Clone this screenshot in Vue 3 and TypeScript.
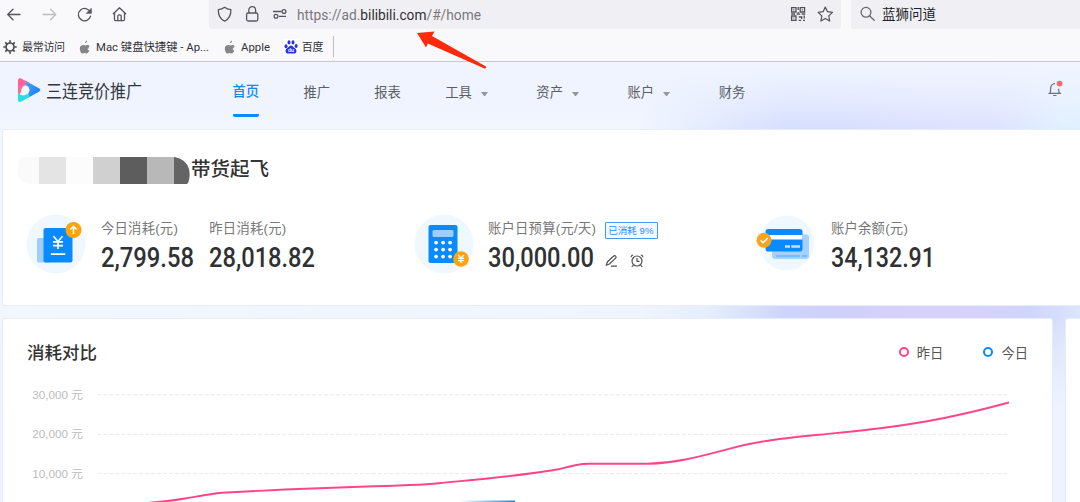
<script setup lang="ts">
interface NavItem { label: string; menu?: boolean; active?: boolean }

const nav: NavItem[] = [
  { label: '首页', active: true },
  { label: '推广' },
  { label: '报表' },
  { label: '工具', menu: true },
  { label: '资产', menu: true },
  { label: '账户', menu: true },
  { label: '财务' },
]

const ticks: string[] = ['30,000 元', '20,000 元', '10,000 元']
const keypad: { x: number; y: number }[] = [0, 1, 2].flatMap((r) =>
  [0, 1, 2].map((c) => ({ x: 20.9 + c * 7, y: 27.8 + r * 7 })),
)
const mosaic: string[] = ['#fafafa', '#e4e4e4', '#fcfcfc', '#d0d0d0', '#5d5d5d', '#b8b8b8', '#646464']
const apple =
  'M8.1 3.1C8.1 1.7 9 .7 10 .4c.1 1.300-.7 2.500-1.900 2.700ZM11.500 8.500c0-1.500 1.100-2.200 1.200-2.300-.7-1-1.800-1.200-2.200-1.200-1-.1-1.700.5-2.200.5-.5 0-1.200-.5-2-.5C4.300 5 2.800 6.300 2.800 8.700c0 2.300 1.500 4.900 2.800 4.900.7 0 1.100-.5 2-.5s1.200.5 2 .5c1.400 0 2.500-2.500 2.700-3-.1-.1-1.800-.6-1.800-2.100Z'
</script>

<template>
  <div class="page">
    <div class="toolbar">
      <svg class="controls" width="208.700" height="29" viewBox="0 0 208.700 29">
        <g fill="none" stroke="#55555d" stroke-width="1.3" stroke-linecap="round" stroke-linejoin="round">
          <path d="M20 14.500H8M13 9.300 7.700 14.500 13 19.700" />
          <path stroke="#bcbcc1" d="M43 14.500H55M50.500 9.300l5.200 5.200-5.200 5.200" />
          <path d="M90.300 12.200a6.200 6.200 0 1 0 .3 4" />
          <path fill="#55555d" stroke-width=".8" d="M91.300 8.700v4.600h-4.600Z" />
          <path d="M113.300 13.800 119.500 7.800 125.700 13.800M114.500 13v6.600q0 1 1 1h8q1 0 1-1V13M117.800 20.300v-4.300q0-1.200 1.700-1.200t1.700 1.200v4.300" />
        </g>
      </svg>
      <div class="address">
        <svg width="88" height="29" viewBox="0 0 88 29">
          <g fill="none" stroke="#55555d" stroke-width="1.3" stroke-linejoin="round">
            <path d="M15.600 7.300c2 1.700 4.100 2.200 6.300 2.300.1 4.700-.7 9.200-6.300 11.600-5.600-2.400-6.400-6.900-6.300-11.600 2.200-.1 4.300-.6 6.300-2.300Z" />
            <rect x="37.600" y="13" width="11.200" height="8" rx="1.500" />
            <path d="M39.800 13v-3a3.400 3.400 0 0 1 6.800 0v3" />
            <path d="M64 11.500h8.600M70 16.300h7" />
            <circle cx="75" cy="11.500" r="1.900" /><circle cx="67" cy="16.300" r="1.900" />
          </g>
        </svg>
        <svg class="url" width="190" height="29"><text x="0" y="20" textLength="184" lengthAdjust="spacingAndGlyphs">https://ad.<tspan class="domain">bilibili.com</tspan>/#/home</text></svg>
        <svg class="tail" width="55" height="29" viewBox="0 0 55 29">
          <g fill="none" stroke="#505057" stroke-width="1.300">
            <path d="M5.600 7.600h4.400v4.400H5.600ZM14.200 7.600h4.400v4.400h-4.400ZM5.600 16h4.400v4.400H5.600Z" />
            <path d="M12.200 7v3M12.200 12v2.500M5.200 14h4M10.700 14.200h3.500M15.700 14h3.500M12.700 17h3v2M18.200 15.500v3M12.700 20.300h2.500M17 20.300h2" />
            <path d="M7.300 9.800h1M15.900 9.800h1M7.300 18.200h1" />
          </g>
          <path d="m39.300 7 2.200 4.700 5 .7-3.700 3.500.9 5.100-4.400-2.500-4.400 2.500.9-5.100-3.700-3.500 5-.7Z" fill="none" stroke="#505057" stroke-width="1.200" stroke-linejoin="round" />
        </svg>
      </div>
      <div class="search">
        <svg width="31" height="29" viewBox="0 0 31 29"><g fill="none" stroke="#68686f" stroke-width="1.300" stroke-linecap="round"><circle cx="15" cy="12.300" r="4.900" /><path d="m18.700 16 4.500 4.300" /></g></svg>
        <span>蓝狮问道</span>
      </div>
    </div>

    <div class="bookmarks">
      <svg class="gear" width="14" height="14" viewBox="0 0 14 14"><g fill="none" stroke="#4a4a50"><circle cx="7" cy="7" r="4" stroke-width="1.700" /><path stroke-width="1.700" d="M7 .3v2.200M7 11.500v2.200M.3 7h2.200M11.500 7h2.200M2.300 2.300l1.500 1.500M10.200 10.200l1.500 1.500M11.700 2.300l-1.500 1.500M3.800 10.200l-1.500 1.500" /></g></svg>
      <span class="bm first">最常访问</span>
      <svg class="apple" width="15" height="14" viewBox="0 0 15 14"><path fill="#858585" :d="apple" /></svg>
      <svg class="bm-svg" width="113" height="20"><text x="0" y="14" textLength="113" lengthAdjust="spacingAndGlyphs">Mac 键盘快捷键 - Ap...</text></svg>
      <svg class="apple second" width="15" height="14" viewBox="0 0 15 14"><path fill="#858585" :d="apple" /></svg>
      <svg class="bm-svg" width="30" height="20"><text x="0" y="14" textLength="29" lengthAdjust="spacingAndGlyphs">Apple</text></svg>
      <svg class="baidu" width="16" height="16" viewBox="0 0 16 16">
        <rect width="16" height="16" rx="1" fill="#fff" />
        <g fill="#2932e1"><ellipse cx="3" cy="7.200" rx="1.500" ry="2" /><ellipse cx="6" cy="3.400" rx="1.500" ry="2.100" /><ellipse cx="10" cy="3.400" rx="1.500" ry="2.100" /><ellipse cx="13.100" cy="7" rx="1.500" ry="2" /><path d="M8 6.500c1.700 0 2.200 1.500 3.600 2.600 1.500 1.200 2.200 2.200 1.700 3.800-.5 1.800-2.300 1.700-5.300 1.700s-4.800.1-5.300-1.700c-.5-1.600.2-2.600 1.700-3.800C5.800 8 6.300 6.500 8 6.500Z" /></g>
        <text x="8" y="13.300" text-anchor="middle" class="du">du</text>
      </svg>
      <span class="bm">百度</span>
      <i class="split"></i>
    </div>

    <header class="header">
      <svg class="logo" width="26" height="28" viewBox="0 0 26 28">
        <defs>
          <linearGradient id="pink" x1="0" y1="0" x2="1" y2="1"><stop stop-color="#ff5a91" /><stop offset="1" stop-color="#f77fae" /></linearGradient>
          <linearGradient id="blue" x1="0" y1="0" x2="1" y2="1"><stop stop-color="#5f9ff0" /><stop offset="1" stop-color="#087fff" /></linearGradient>
          <linearGradient id="cyan" x1="0" y1="0" x2="1" y2="1"><stop stop-color="#12e9e9" /><stop offset="1" stop-color="#3ad5de" /></linearGradient>
        </defs>
        <path fill="url(#pink)" d="M2 4.800Q2 1.600 5 2.500L13.500 6.800 10 10Q6 11 5.500 15.500L2 20Z" />
        <path fill="url(#blue)" d="M9 4.500 23 12.300Q25.500 14 23 15.700L12.500 21.500 11.500 18.500Q14.500 15 12.800 11.500L8.500 9.500Q12 7.500 9 4.500Z" />
        <path fill="url(#cyan)" d="M2 17Q4.500 20 8.500 19.300 11.500 18.500 13 16.500L13.500 21 5.500 25.600Q2 27 2 23.500Z" />
        <path fill="#f4fbff" d="M5.300 14.500Q5.500 10.500 9.500 9.300 13.300 10.500 13.300 14.300 12 18 8.300 18.600 5.500 18 5.300 14.500Z" />
      </svg>
      <svg class="brand" width="98" height="36"><text x="0" y="25.500" textLength="96" lengthAdjust="spacingAndGlyphs">三连竞价推广</text></svg>
      <nav class="nav">
        <div v-for="item in nav" :key="item.label" class="nav-item" :class="{ active: item.active }">
          <span>{{ item.label }}</span>
          <i v-if="item.menu" class="caret"></i>
        </div>
      </nav>
      <svg class="bell" width="18" height="20" viewBox="0 0 18 20">
        <g fill="none" stroke="#6a7079" stroke-width="1.200"><path d="M1.500 14.400h12.600M3.100 14.200C3.700 12.500 3.500 10.500 3.700 8.500q.5-3.500 4.300-4M12.300 14.200q-.7-2-.7-4.500M6.200 16.500h3.300" /></g>
        <circle cx="12.600" cy="4.600" r="2.900" fill="#ff6767" />
      </svg>
    </header>

    <section class="card summary">
      <div class="account">
        <svg width="172" height="28" viewBox="0 0 172 28">
          <defs><clipPath id="mask"><path d="M6 0H156.500Q168 2 171 12 172.500 19 170.500 25L169 27H24Q0 28 0 17V10Q0 0 6 0Z" /></clipPath></defs>
          <g clip-path="url(#mask)"><rect v-for="(c, i) in mosaic" :key="i" :x="i ? 21 + (i - 1) * 27 : 0" y="0" :width="i ? 27.200 : 21.200" height="27" :fill="c" /></g>
        </svg>
        <h1>带货起飞</h1>
      </div>
      <div class="stats">
        <svg class="ico" width="62" height="62" viewBox="0 0 62 62">
          <circle cx="31" cy="31" r="29.500" fill="#eff7ff" />
          <rect x="12" y="25" width="14" height="24.500" rx="2" fill="#9dceff" />
          <rect x="18.500" y="15" width="29" height="34.500" rx="2" fill="#0a8aff" />
          <g fill="none" stroke="#fff" stroke-width="1.700"><path d="m28.500 23.300 4.500 5.200 4.500-5.200M33 28.500V36M28 28.900h10M28 32.600h10M25.800 41.200h14.500" /></g>
          <circle cx="48.500" cy="17" r="8" fill="#ffa30b" />
          <path d="M48.500 21v-7.300M45.300 16.500l3.200-3.100 3.200 3.100" fill="none" stroke="#fff" stroke-width="1.600" />
        </svg>
        <div class="stat s1"><div class="label">今日消耗(元)</div><svg class="amount" width="96" height="38"><text class="num" x="0" y="28" textLength="93" lengthAdjust="spacingAndGlyphs">2,799.58</text></svg></div>
        <div class="stat s2"><div class="label">昨日消耗(元)</div><svg class="amount" width="108" height="38"><text class="num" x="0" y="28" textLength="106" lengthAdjust="spacingAndGlyphs">28,018.82</text></svg></div>
        <svg class="ico i2" width="62" height="62" viewBox="0 0 62 62">
          <circle cx="31" cy="31" r="29.500" fill="#eff7ff" />
          <rect x="15.500" y="12" width="29" height="38" rx="2" fill="#0a8aff" />
          <rect x="19.500" y="17" width="21" height="7" rx="1.500" fill="#9dceff" />
          <circle v-for="(k, i) in keypad" :key="i" :cx="k.x + 2.200" :cy="k.y + 1.800" r="1.900" fill="#fff" />
          <circle cx="48" cy="46" r="7.800" fill="#ffa30b" />
          <path d="m45.200 42 2.800 3 2.800-3M48 45v5M45 45.300h6M45 47.600h6" fill="none" stroke="#fff" stroke-width="1.200" />
        </svg>
        <div class="stat s3">
          <div class="label">账户日预算(元/天)<span class="badge">已消耗 9%</span></div>
          <div class="value-row">
            <svg class="amount" width="108" height="38"><text class="num" x="0" y="28" textLength="106" lengthAdjust="spacingAndGlyphs">30,000.00</text></svg>
            <svg class="tools" width="44" height="18" viewBox="0 0 44 18"><g fill="none" stroke="#505050" stroke-width="1.200" stroke-linejoin="round">
              <path d="M1.200 13.300 2.500 9.700 8.700 4q1-.8 2 .1.900 1-.1 2L4.500 12ZM6 14.200H12" />
              <circle cx="32" cy="9" r="5" /><path d="M32 6v3.300h2.500M26 5.200q.2-2 2.200-2.200M35.800 3q2 .2 2.200 2.200M28.300 13l-1.500 2M35.700 13l1.500 2" />
            </g></svg>
          </div>
        </div>
        <svg class="ico i3" width="62" height="62" viewBox="0 0 62 62">
          <circle cx="32.500" cy="30" r="27.500" fill="#eff7ff" />
          <rect x="18" y="21.500" width="37" height="24.500" rx="3" fill="#a4d1ff" />
          <rect x="11.500" y="16" width="37" height="22.500" rx="2.800" fill="#0a8aff" />
          <path fill="#fff" d="M11.500 22h37v4.500h-37Z" />
          <path d="M31 33.500h5M37.300 33.500H46" stroke="#c6e2ff" stroke-width="2.500" />
          <path d="M22 43h24M48 43h5" stroke="#67b4fa" stroke-width="1.600" />
          <circle cx="10" cy="27.200" r="7.500" fill="#f9a51c" /><path d="m6.500 27.200 2.500 2.500 4.800-4.700" fill="none" stroke="#fff" stroke-width="1.500" />
        </svg>
        <div class="stat s4"><div class="label">账户余额(元)</div><svg class="amount" width="108" height="38"><text class="num" x="0" y="28" textLength="104" lengthAdjust="spacingAndGlyphs">34,132.91</text></svg></div>
      </div>
    </section>

    <div class="bottom">
      <section class="card trend">
        <div class="trend-head">
          <h2>消耗对比</h2>
          <div class="legend"><i class="ring pink"></i><span>昨日</span><i class="ring blue"></i><span>今日</span></div>
        </div>
        <div class="chart">
          <div class="ticks"><span v-for="t in ticks" :key="t">{{ t }}</span></div>
          <svg class="plot" width="914" height="120" viewBox="0 0 914 120">
            <defs><linearGradient id="today"><stop stop-color="#1a84df" stop-opacity="0" /><stop offset="1" stop-color="#1a84df" /></linearGradient></defs>
            <path d="M.5 12.800H912.500M.5 52.300H912.500M.5 91.600H912.500" fill="none" stroke="#e8e8e8" stroke-dasharray="4 1.960" />
            <path d="M50 121C64 120 76 118.500 88 116.500 103 114 112 112 125 110.800L188 107.500 263 104.700C302 103.700 332 102.200 342 101.200 380 97.500 424 94 463 87 472 84.500 480 82 491 81.800H551C582 80.800 606 73.500 630 67.300 663 58.200 690 56 731 51.900 808 45 854 36.300 912 20.500" fill="none" stroke="#ff4587" stroke-width="1.900" />
            <path d="M363 118.500h55v1.500h-55Z" fill="url(#today)" />
          </svg>
        </div>
      </section>
      <section class="card side"></section>
    </div>

    <svg class="pointer" width="74" height="42" viewBox="0 0 74 42"><path fill="#ff2a0d" d="M1 3 18.500 1.500 16 6 69.500 36.200Q71.500 38.200 68.500 38.500L11.800 13.600 10 17.500Z" /></svg>
  </div>
</template>

<style>
body { margin: 0; }
</style>

<style scoped>
.page {
  position: relative;
  width: 1080px;
  height: 502px;
  overflow: hidden;
  display: flex;
  flex-direction: column;
  font-family: "Liberation Sans", "Noto Sans CJK SC", sans-serif;
  background:
    linear-gradient(180deg, rgba(237, 244, 255, 0) 320px, rgba(237, 244, 255, 0.45) 350px, #edf4ff 410px),
    linear-gradient(90deg, #f1f6ff 0, #f0f5ff 640px, #e4eefd 710px, #ced5fb 785px, #cfd0fb 830px, #d6d1fb 900px, #d6d2fb 980px, #cfd5fc 1030px, #dbe5fd 1080px);
}
svg { display: block; flex: none; overflow: visible; }
h1, h2 { margin: 0; font-weight: 500; }
.toolbar { flex: none; height: 29px; display: flex; background: #f9f9fb; }
.address { width: 632.300px; display: flex; background: #f0f0f4; border-radius: 0 0 3px 3px; }
.url { font-size: 14px; fill: #78787e; font-family: Roboto, "Liberation Sans", sans-serif; }
.domain { fill: #303035; }
.tail { margin-left: auto; }
.search { margin-left: 10px; flex: 1; display: flex; background: #f0f0f4; border-radius: 0 0 0 3px; font-size: 13.5px; line-height: 30px; color: #202027; }
.bookmarks { box-sizing: border-box; flex: none; height: 33px; display: flex; align-items: center; padding: 3px 0 0 3px; background: #f9f9fb; border-bottom: 1px solid #c6c7ca; font-size: 11px; color: #333338; }
.bm { line-height: 20px; letter-spacing: -0.3px; }
.bm.first { margin-left: 5px; }
.bm-svg { fill: #333338; font-family: Roboto, "Noto Sans CJK SC", sans-serif; font-size: 11px; }
.apple { margin: 0 4px 0 12px; }
.apple.second { margin-left: 13px; }
.baidu { margin: 0 3px 0 12px; }
.du { fill: #fff; font: 700 5px "Liberation Sans", sans-serif; }
.split { width: 1px; height: 21px; margin-left: 10px; background: #bdbdc2; }
.header {
  flex: none;
  height: 67px;
  display: flex;
  align-items: flex-start;
  box-sizing: border-box;
  padding-left: 16px;
  background:
    linear-gradient(180deg, #f0f5ff 0, rgba(239, 243, 255, 0.85) 30%, rgba(238, 242, 255, 0.5) 65%, rgba(238, 242, 255, 0) 100%),
    linear-gradient(90deg, #f1f6ff 0, #f1f6ff 640px, #e3ebfe 710px, #d5deff 785px, #d6deff 840px, #dce0ff 920px, #dee3fe 1000px, #e0f0ff 1060px, #e0f1ff 1080px);
}
.logo { margin-top: 14px; }
.brand { margin: 10px 0 0 4px; fill: #33373c; font-size: 18.5px; }
.nav { display: flex; gap: 44.3px; margin-left: 88.500px; }
.nav-item { box-sizing: border-box; height: 55px; padding-top: 21px; display: flex; font-size: 13.3px; line-height: 20px; color: #5b5f65; }
.active { color: #1686f7; font-weight: 500; border-bottom: 3px solid #0a8aff; border-radius: 2px; padding-top: 20px; }
.caret { margin: 9px 4.300px 0 9px; border: solid transparent; border-width: 4px 3.500px 0; border-top-color: #93979d; box-sizing: border-box; width: 7px; height: 4px; }
.bell { margin: 17px 15px 0 auto; }
.card { box-sizing: border-box; background: #fff; border: 1px solid #e8edf5; border-radius: 3px; }
.summary { flex: none; width: 1090px; height: 177px; margin-left: 2px; padding: 26px 0 0 15px; }
.account { display: flex; height: 32px; }
.account svg { margin-top: 1px; }
.account h1 { margin-left: 1px; font-size: 19.500px; line-height: 26px; color: #333; }
.stats { display: flex; margin-top: 25px; }
.ico { margin: 0 0 0 7px; }
.stat { margin-top: 6px; }
.s1 { margin-left: 14px; width: 108.300px; }
.s2 { width: 107.700px; }
.label { height: 20px; display: flex; align-items: center; font-size: 13.300px; letter-spacing: 0.250px; color: #777; white-space: nowrap; line-height: 20px; }
.stat .amount { margin-top: 0; }
.num { font: 500 27px Roboto, "Liberation Sans", sans-serif; fill: #303133; }
.i2 { margin-left: 96px; }
.s3 { margin-left: 13px; width: 171px; }
.badge { box-sizing: border-box; width: 53px; height: 17px; margin: 2px 0 0 9px; padding: 0 2px; border: 1px solid #3d9bfb; border-radius: 1px; background: #f2f9ff; color: #2a91fb; font-size: 9.600px; letter-spacing: 0; line-height: 15px; }
.value-row { display: flex; }
.stat .tools { margin: 13px 0 0 9.500px; }
.i3 { margin-left: 95px; }
.s4 { margin-left: 15px; }
.bottom { flex: none; display: flex; gap: 12px; height: 190px; margin: 12px 0 0 2px; }
.trend { width: 1051px; flex: none; }
.side { width: 40px; flex: none; }
.trend-head { display: flex; justify-content: space-between; height: 63px; padding: 22px 24px 0; box-sizing: border-box; }
h2 { font-size: 17.500px; line-height: 24px; color: #333; }
.legend { display: flex; align-items: center; height: 22px; font-size: 13.300px; color: #555; }
.ring { box-sizing: border-box; width: 10px; height: 10px; border: 2px solid; border-radius: 50%; margin-right: 8px; }
.pink { color: #ff4587; }
.blue { color: #0a8aff; margin-left: 40px; }
.chart { display: flex; }
.ticks { width: 80px; text-align: right; font-size: 11.700px; color: #bcbcbc; }
.ticks span { display: block; height: 39.300px; line-height: 26px; }
.plot { margin-left: 14px; overflow: hidden; }
.pointer { position: absolute; left: 416px; top: 30px; }
</style>
